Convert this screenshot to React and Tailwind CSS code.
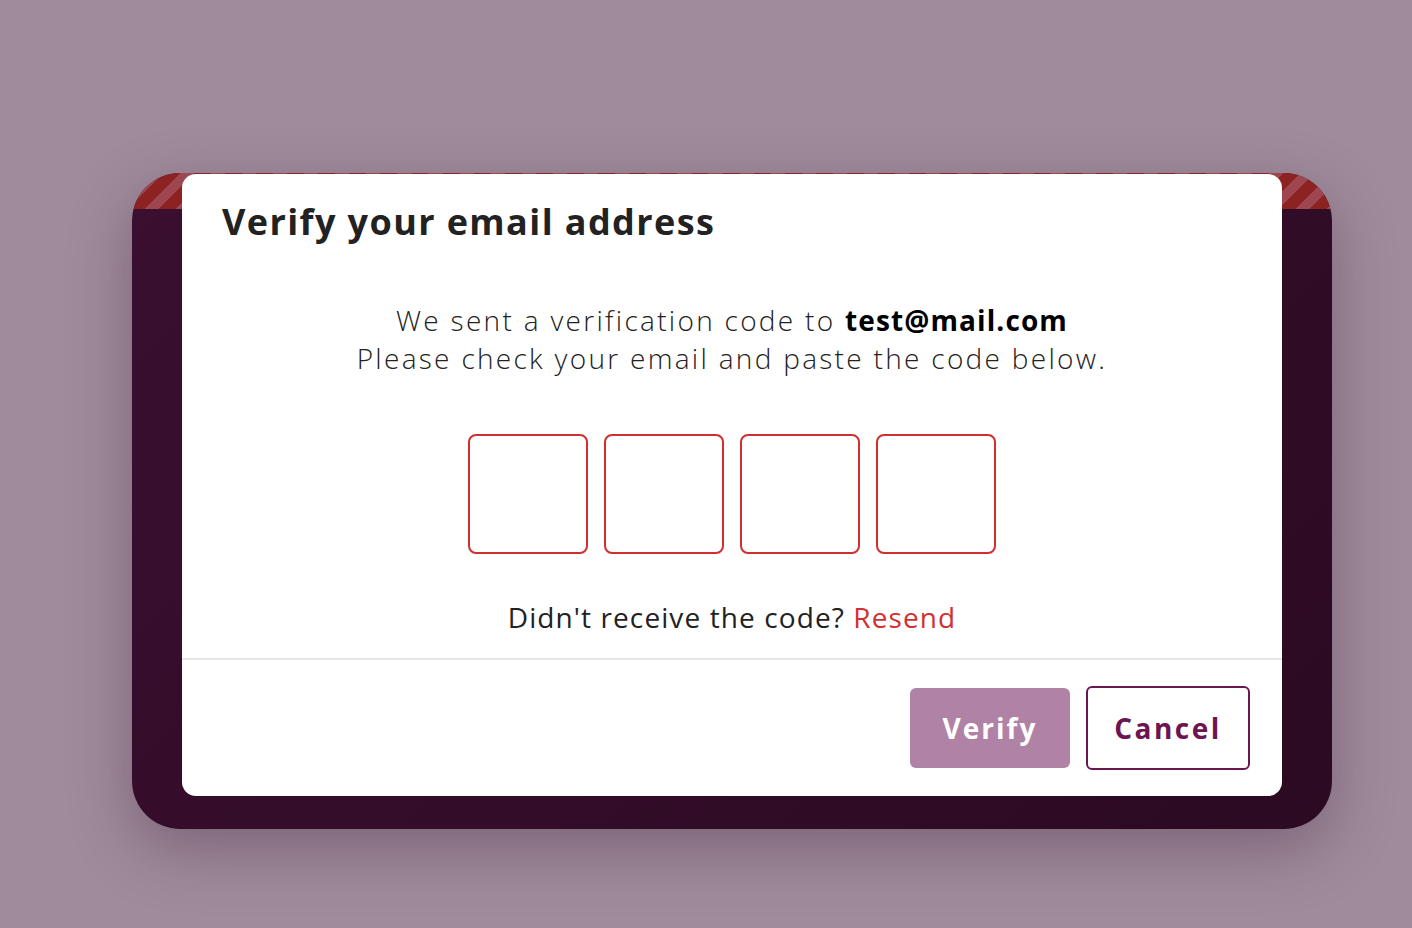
export default function App() {
  return (
    <div className="min-h-[928px] w-full bg-[#9f8b9b] pt-[173px] pl-[132px]" style={{ fontFamily: "'Open Sans', Lato, sans-serif" }}>
      <div className="relative w-[1200px] h-[656px] rounded-[48px] overflow-hidden bg-[linear-gradient(135deg,#3a0f30,#2c0a22)] shadow-[0_20px_60px_rgba(60,30,55,0.35)] pl-[50px] pt-px">
        <div className="absolute left-0 right-0 top-0 h-[36px] bg-[repeating-linear-gradient(135deg,#8c2222_0px,#8c2222_12px,#9f4751_12px,#9f4751_22px)]" />
        <div className="relative z-10 w-[1100px] h-[622px] bg-white rounded-[14px] flex flex-col">
          <h1 className="pl-[40px] pt-[26px] text-[36px] leading-[44px] font-bold tracking-[1.4px] text-[#222]">Verify your email address</h1>
          <div className="mt-[57px] text-center text-[28px] leading-[38px] text-[#222] font-light tracking-[2.3px]">
            <p>We sent a verification code to <span className="font-bold text-black tracking-[1.1px]">test@mail.com</span></p>
            <p>Please check your email and paste the code below.</p>
          </div>
          <div className="mt-[57px] flex justify-center gap-[16px]">
            {[0, 1, 2, 3].map((i) => (
              <div key={i} className="w-[120px] h-[120px] rounded-[8px] border-2 border-[#d32f2f]" />
            ))}
          </div>
          <p className="mt-[44px] text-center text-[28px] leading-[38px] text-[#222] tracking-[1.1px]">
            Didn't receive the code? <span className="text-[#d32f2f]">Resend</span>
          </p>
          <div className="mt-[22px] border-t-2 border-[#e5e5e5] flex justify-end items-center gap-[16px] pr-[32px] pt-[26px]">
            <button className="w-[160px] h-[80px] rounded-[6px] bg-[#b082a6] text-white text-[28px] font-bold tracking-[2px]">Verify</button>
            <button className="w-[164px] h-[84px] rounded-[6px] border-2 border-[#6b1651] text-[#6b1651] text-[28px] font-bold tracking-[2.5px]">Cancel</button>
          </div>
        </div>
      </div>
    </div>
  );
}
